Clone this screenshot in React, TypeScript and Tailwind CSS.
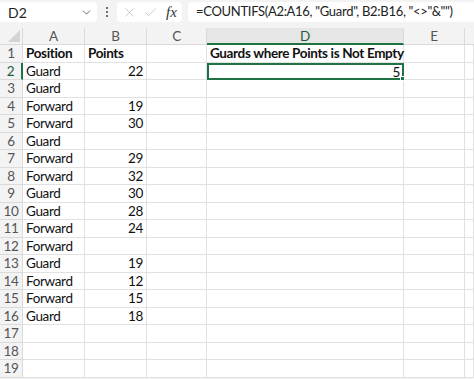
import { ChevronDown, X, Check } from "lucide-react";

const cols = ["A", "B", "C", "D", "E"];

const rows: [string, string][] = [
  ["Guard", "22"],
  ["Guard", ""],
  ["Forward", "19"],
  ["Forward", "30"],
  ["Guard", ""],
  ["Forward", "29"],
  ["Forward", "32"],
  ["Guard", "30"],
  ["Guard", "28"],
  ["Forward", "24"],
  ["Forward", ""],
  ["Guard", "19"],
  ["Forward", "12"],
  ["Forward", "15"],
  ["Guard", "18"],
  ["", ""],
  ["", ""],
  ["", ""],
];

const grid = "grid grid-cols-[23px_62px_62px_60px_197px_61px_1fr]";
const cell = "h-[17.5px] border-r border-b border-[#e1e1e1] px-[3px] leading-[17px] whitespace-nowrap overflow-visible";

function FormulaBar() {
  return (
    <div className="flex h-[22px] items-center gap-[6px] bg-[#f3f3f3] pt-[2px]" style={{ fontFamily: 'Lato, "Open Sans", sans-serif' }}>
      <div className="flex h-[20px] w-[97px] items-center justify-between rounded-r-[4px] bg-white pl-[8px] pr-[4px] text-[14px] text-[#222]">
        <span>D2</span>
        <ChevronDown size={13} strokeWidth={1.6} className="text-[#555]" />
      </div>
      <div className="flex w-[8px] flex-col items-center gap-[2px]">
        <span className="h-[2px] w-[2px] rounded-full bg-[#444]" />
        <span className="h-[2px] w-[2px] rounded-full bg-[#444]" />
        <span className="h-[2px] w-[2px] rounded-full bg-[#444]" />
      </div>
      <div className="flex h-[20px] w-[65px] items-center gap-[6px] rounded-[4px] bg-white pl-[5px]">
        <X size={15} strokeWidth={1.2} className="text-[#b8b8b8]" />
        <Check size={15} strokeWidth={1.2} className="text-[#b8b8b8]" />
        <span className="ml-[2px] text-[15px] italic text-[#333]" style={{ fontFamily: '"Liberation Serif", serif' }}>
          fx
        </span>
      </div>
      <div className="flex h-[20px] flex-1 items-center overflow-hidden whitespace-nowrap rounded-l-[4px] bg-white pl-[8px] text-[13px] tracking-[-0.3px] text-[#222]">
        =COUNTIFS(A2:A16, "Guard", B2:B16, "&lt;&gt;"&amp;"")
      </div>
    </div>
  );
}

export default function App() {
  return (
    <div className="h-[379px] w-[474px] overflow-hidden bg-[#f3f3f3]">
      <FormulaBar />
      <div
        className="mt-[6px] bg-white text-[13.5px] tracking-[-0.35px] text-[#111]"
        style={{ fontFamily: 'Lato, "Open Sans", sans-serif' }}
      >
        <div className={`${grid} bg-[#f3f3f3] text-[#555]`}>
          <div className="relative h-[17px] border-r border-b border-[#dadada]">
            <svg className="absolute right-[2px] bottom-[2px]" width="12" height="12" viewBox="0 0 12 12">
              <path d="M12 0 L12 12 L0 12 Z" fill="#d4d4d4" />
            </svg>
          </div>
          {cols.map((c) => (
            <div
              key={c}
              className={`h-[17px] border-r border-[#dadada] text-center leading-[17px] ${
                c === "D" ? "border-b-2 border-b-[#1f7244] bg-[#e6e6e6] text-[#1f5c3a]" : "border-b"
              }`}
            >
              {c}
            </div>
          ))}
          <div className="h-[17px] border-b border-[#dadada]" />
        </div>

        <div className={grid}>
          <div className="h-[17.5px] border-r border-b border-[#dadada] bg-[#f3f3f3] text-center leading-[17px] text-[#555]">1</div>
          <div className={`${cell} font-bold`}>Position</div>
          <div className={`${cell} font-bold`}>Points</div>
          <div className={cell} />
          <div className={`${cell} font-bold`}>Guards where Points is Not Empty</div>
          <div className={cell} />
          <div className={cell} />
        </div>

        {rows.map(([pos, pts], i) => {
          const n = i + 2;
          const sel = n === 2;
          return (
            <div key={n} className={grid}>
              <div
                className={`h-[17.5px] border-b border-[#dadada] bg-[#f3f3f3] text-center leading-[17px] ${
                  sel ? "border-r-2 border-r-[#1f7244] bg-[#e6e6e6] text-[#1f5c3a]" : "border-r text-[#555]"
                }`}
              >
                {n}
              </div>
              <div className={cell}>{pos}</div>
              <div className={`${cell} text-right`}>{pts}</div>
              <div className={cell} />
              {sel ? (
                <div className="relative h-[17.5px] border-2 border-[#1f7244] px-[2px] text-right leading-[14px]">
                  5
                  <span className="absolute -right-[3px] -bottom-[3px] h-[5px] w-[5px] border border-white bg-[#1f7244]" />
                </div>
              ) : (
                <div className={cell} />
              )}
              <div className={cell} />
              <div className={cell} />
            </div>
          );
        })}
      </div>
    </div>
  );
}
